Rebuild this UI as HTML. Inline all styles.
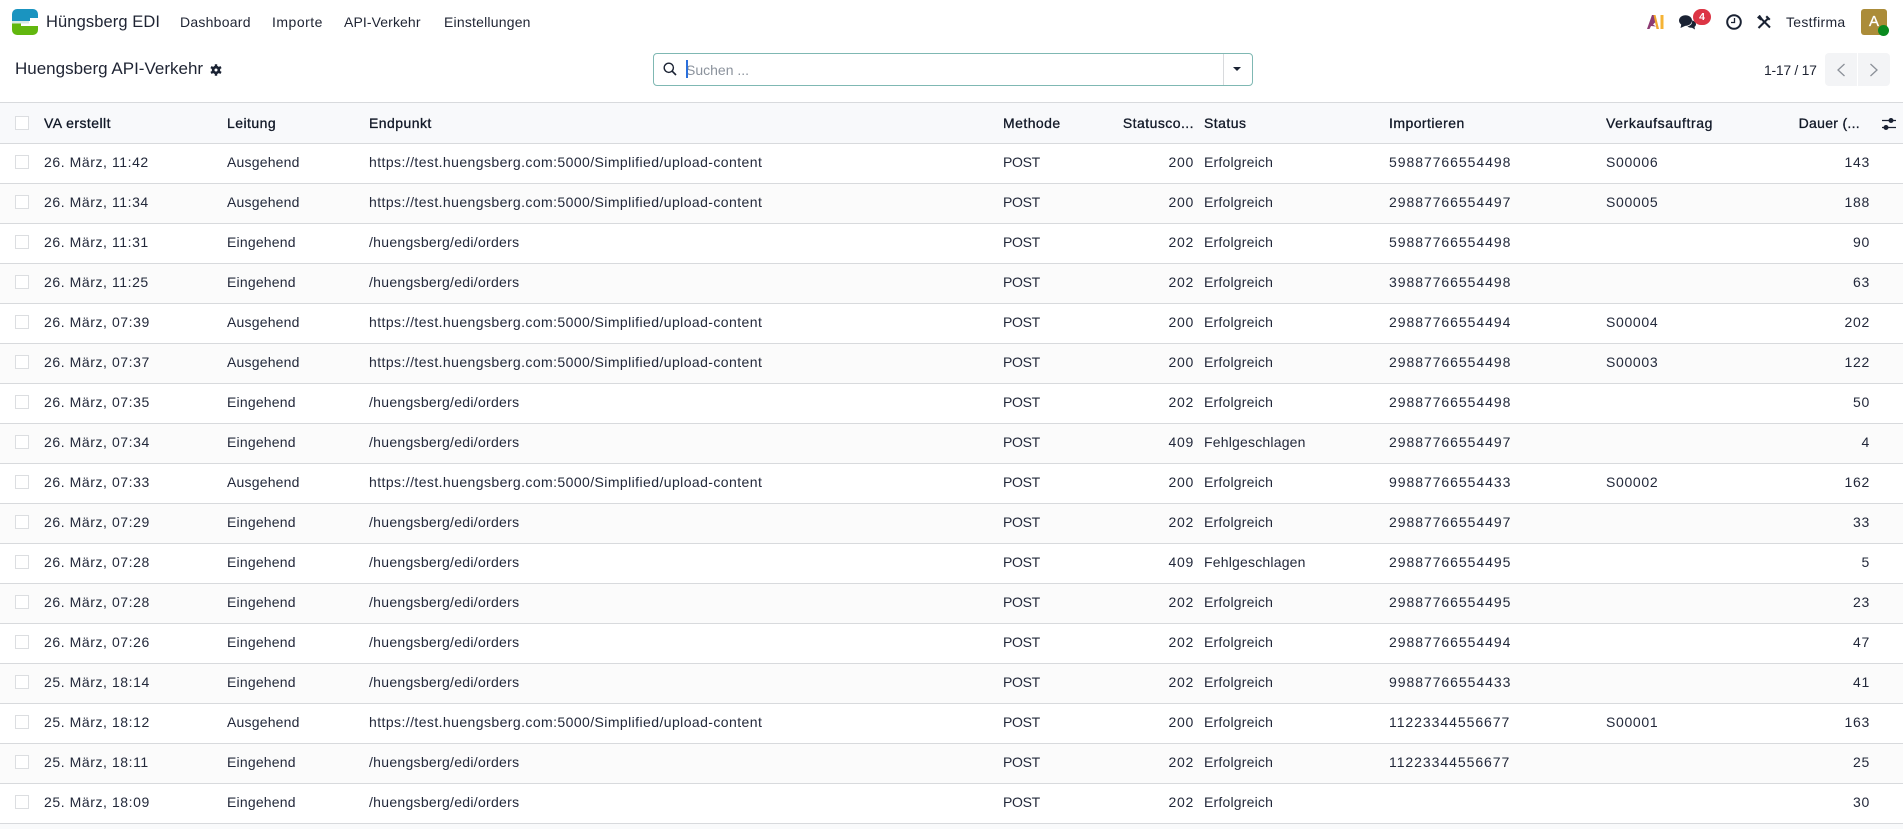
<!DOCTYPE html>
<html lang="de"><head><meta charset="utf-8"><title>Huengsberg API-Verkehr</title>
<style>
*{box-sizing:border-box}
html,body{margin:0;padding:0;width:1903px;height:829px;overflow:hidden;background:#f9fafb;font-family:"Liberation Sans",sans-serif;color:#1f2433;font-size:14px}
.top{position:absolute;left:0;top:0;width:1903px;height:103px;background:#fff}
.a{position:absolute;white-space:nowrap;line-height:20px}
table{position:absolute;left:0;top:102px;width:1903px;border-collapse:collapse;table-layout:fixed;border-top:1px solid #d8dadd;background:#fff}
th{height:41px;background:#f8f9fb;font-weight:400;text-align:left;color:#111827;-webkit-text-stroke:.3px #111827;letter-spacing:.45px;padding:0;border-bottom:1px solid #d8dadd;white-space:nowrap;overflow:hidden}
td{height:40px;padding:0 0 3px;border-bottom:1px solid #d8dadd;white-space:nowrap;color:#22283a;overflow:hidden}
tbody tr:nth-child(even) td{background:#fbfbfb}
td:nth-child(2){letter-spacing:.57px}
td:nth-child(3){letter-spacing:.2px}
td:nth-child(4){letter-spacing:.29px}
td.u{letter-spacing:.42px}
td:nth-child(5){letter-spacing:-.3px}
td:nth-child(6){letter-spacing:.7px}
td:nth-child(7){letter-spacing:.2px}
td:nth-child(8){letter-spacing:.95px}
td:nth-child(9){letter-spacing:.67px}
td:nth-child(10){letter-spacing:.7px}
.r{text-align:right;padding-right:10px}
th.d{padding-right:20px;letter-spacing:.3px}
th.v{letter-spacing:.6px}
.c{position:relative}
.c i{position:absolute;left:15px;top:11px;width:14px;height:14px;border:1px solid #dcdee1;background:#fff;display:block}
th.c i{top:13px}
</style></head><body>
<div class="top">
<svg class="a" style="left:12px;top:9px" width="26" height="26" viewBox="0 0 26 26"><path d="M5 0H21a5 5 0 0 1 5 5V9H18V12H0V5a5 5 0 0 1 5-5z" fill="#1a94c0"/><rect x="18" y="9" width="8" height="3" fill="#fff"/><rect x="0" y="12" width="17" height="2.500" fill="#d6e9e4"/><path d="M0 14.500H9V17H26v4a5 5 0 0 1-5 5H5a5 5 0 0 1-5-5z" fill="#62b70f"/></svg>
<div class="a" style="left:46px;top:12px;font-size:16.500px;letter-spacing:.1px">Hüngsberg EDI</div>
<div class="a" style="left:180px;top:12px;letter-spacing:.25px">Dashboard</div>
<div class="a" style="left:272px;top:12px;letter-spacing:.5px">Importe</div>
<div class="a" style="left:344px;top:12px;letter-spacing:.1px">API-Verkehr</div>
<div class="a" style="left:444px;top:12px;letter-spacing:.2px">Einstellungen</div>
<svg class="a" style="left:1647px;top:15px" width="17" height="14" viewBox="0 0 17 14"><path d="M0 14L5 0H8L9.500 6 6 9.500 9 11.500 4 11 2.500 14z" fill="#8c3b73"/><path d="M6.500 0H8.500L12 14H9.500z" fill="#f0a52e"/><rect x="13.500" y="0" width="3" height="14" fill="#f5b335"/></svg>
<svg class="a" style="left:1679px;top:15px" width="17" height="15" viewBox="0 0 17 15"><ellipse cx="6.500" cy="5.500" rx="6.500" ry="5.300" fill="#1a2233"/><path d="M2.500 8.500L1.500 13L7 10.500z" fill="#1a2233"/><path d="M13.500 5.500c2 .7 3.500 2 3.500 3.800 0 1.100-.6 2-1.500 2.600l.5 2.600-3-1.800c-2 .2-3.600-.3-4.600-1.400 3-.3 5.300-2.600 4.600-5.800z" fill="#1a2233"/></svg>
<div class="a" style="left:1693px;top:9px;width:18px;height:16px;border-radius:8px;background:#dc3545;color:#fff;font-size:10.500px;font-weight:700;text-align:center;line-height:16px">4</div>
<svg class="a" style="left:1726px;top:14px" width="16" height="16" viewBox="0 0 16 16"><circle cx="8" cy="8" r="6.800" fill="none" stroke="#1a2233" stroke-width="2"/><path d="M8.500 4v4.500H5" fill="none" stroke="#1a2233" stroke-width="1.300"/></svg>
<svg class="a" style="left:1756px;top:14px" width="16" height="16" viewBox="0 0 16 16"><path d="M2.500 14L12 4.500" stroke="#1a2233" stroke-width="2" fill="none"/><path d="M11 1.500L14.500 5 13 6.500 9.500 3z" fill="#1a2233"/><path d="M5 4.500L14 13.500" stroke="#1a2233" stroke-width="2" fill="none"/><path d="M1 3.500L3.500 1 4 1 6.500 4.500 4.500 6.500z" fill="#1a2233"/></svg>
<div class="a" style="left:1786px;top:12px;font-size:14px;letter-spacing:.3px">Testfirma</div>
<div class="a" style="left:1861px;top:9px;width:26px;height:26px;border-radius:3px;background:#ab8c39;color:#fff;font-size:15px;-webkit-text-stroke:.3px #fff;text-align:center;line-height:26px">A</div>
<div class="a" style="left:1878px;top:25px;width:11px;height:11px;border-radius:50%;background:#0a8a1f"></div>
<div class="a" style="left:15px;top:59px;font-size:17px">Huengsberg API-Verkehr</div>
<svg class="a" style="left:210px;top:64px" width="12" height="12" viewBox="0 0 12 12"><path d="M6 .3v11.400M1 3.100l10 5.800M1 8.900l10-5.800" stroke="#1a2233" stroke-width="2.400"/><circle cx="6" cy="6" r="4.200" fill="#1a2233"/><circle cx="6" cy="6" r="1.500" fill="#fff"/></svg>
<div class="a" style="left:653px;top:53px;width:600px;height:33px;border:1px solid #7fb8b3;border-radius:4px;background:#fff"></div>
<div class="a" style="left:1223px;top:54px;width:1px;height:31px;background:#d8dadd"></div>
<svg class="a" style="left:663px;top:62px" width="14" height="14" viewBox="0 0 14 14"><circle cx="5.800" cy="5.800" r="4.600" fill="none" stroke="#1a2233" stroke-width="1.400"/><path d="M9.200 9.200L13 13" stroke="#1a2233" stroke-width="1.600"/></svg>
<div class="a" style="left:686px;top:60px;color:#8b929c">Suchen ...</div>
<div class="a" style="left:686px;top:60px;width:2px;height:18px;background:#2a6fdb"></div>
<div class="a" style="left:1233px;top:67px;width:0;height:0;border-left:4.500px solid transparent;border-right:4.500px solid transparent;border-top:4.500px solid #1a2233"></div>
<div class="a" style="left:1764px;top:60px;letter-spacing:-.3px">1-17 / 17</div>
<div class="a" style="left:1825px;top:53px;width:32px;height:33px;background:#f3f4f6;border-radius:4px 0 0 4px"></div>
<div class="a" style="left:1858px;top:53px;width:32px;height:33px;background:#f3f4f6;border-radius:0 4px 4px 0"></div>
<svg class="a" style="left:1836px;top:62px" width="10" height="16" viewBox="0 0 10 16"><path d="M8.500 2L2 8l6.500 6" fill="none" stroke="#8b9098" stroke-width="1.300"/></svg>
<svg class="a" style="left:1869px;top:62px" width="10" height="16" viewBox="0 0 10 16"><path d="M1.500 2L8 8l-6.500 6" fill="none" stroke="#8b9098" stroke-width="1.300"/></svg>
</div>
<table>
<colgroup><col style="width:44px"><col style="width:183px"><col style="width:142px"><col style="width:634px"><col style="width:107px"><col style="width:94px"><col style="width:185px"><col style="width:217px"><col style="width:174px"><col style="width:100px"><col style="width:23px"></colgroup>
<thead><tr><th class="c"><i></i></th><th>VA erstellt</th><th>Leitung</th><th>Endpunkt</th><th>Methode</th><th class="r">Statusco...</th><th>Status</th><th>Importieren</th><th class="v">Verkaufsauftrag</th><th class="r d">Dauer (...</th><th style="position:relative"><svg style="position:absolute;left:2px;top:14px" width="14" height="14" viewBox="0 0 14 14"><path d="M0 3.500H14M0 10.500H14" stroke="#1a2233" stroke-width="1.200"/><circle cx="9" cy="3.500" r="2.500" fill="#1a2233"/><circle cx="4" cy="10.500" r="2.500" fill="#1a2233"/></svg></th></tr></thead>
<tbody>
<tr><td class="c"><i></i></td><td>26. März, 11:42</td><td>Ausgehend</td><td class="u">https://test.huengsberg.com:5000/Simplified/upload-content</td><td>POST</td><td class="r">200</td><td>Erfolgreich</td><td>59887766554498</td><td>S00006</td><td class="r">143</td><td></td></tr>
<tr><td class="c"><i></i></td><td>26. März, 11:34</td><td>Ausgehend</td><td class="u">https://test.huengsberg.com:5000/Simplified/upload-content</td><td>POST</td><td class="r">200</td><td>Erfolgreich</td><td>29887766554497</td><td>S00005</td><td class="r">188</td><td></td></tr>
<tr><td class="c"><i></i></td><td>26. März, 11:31</td><td>Eingehend</td><td>/huengsberg/edi/orders</td><td>POST</td><td class="r">202</td><td>Erfolgreich</td><td>59887766554498</td><td></td><td class="r">90</td><td></td></tr>
<tr><td class="c"><i></i></td><td>26. März, 11:25</td><td>Eingehend</td><td>/huengsberg/edi/orders</td><td>POST</td><td class="r">202</td><td>Erfolgreich</td><td>39887766554498</td><td></td><td class="r">63</td><td></td></tr>
<tr><td class="c"><i></i></td><td>26. März, 07:39</td><td>Ausgehend</td><td class="u">https://test.huengsberg.com:5000/Simplified/upload-content</td><td>POST</td><td class="r">200</td><td>Erfolgreich</td><td>29887766554494</td><td>S00004</td><td class="r">202</td><td></td></tr>
<tr><td class="c"><i></i></td><td>26. März, 07:37</td><td>Ausgehend</td><td class="u">https://test.huengsberg.com:5000/Simplified/upload-content</td><td>POST</td><td class="r">200</td><td>Erfolgreich</td><td>29887766554498</td><td>S00003</td><td class="r">122</td><td></td></tr>
<tr><td class="c"><i></i></td><td>26. März, 07:35</td><td>Eingehend</td><td>/huengsberg/edi/orders</td><td>POST</td><td class="r">202</td><td>Erfolgreich</td><td>29887766554498</td><td></td><td class="r">50</td><td></td></tr>
<tr><td class="c"><i></i></td><td>26. März, 07:34</td><td>Eingehend</td><td>/huengsberg/edi/orders</td><td>POST</td><td class="r">409</td><td>Fehlgeschlagen</td><td>29887766554497</td><td></td><td class="r">4</td><td></td></tr>
<tr><td class="c"><i></i></td><td>26. März, 07:33</td><td>Ausgehend</td><td class="u">https://test.huengsberg.com:5000/Simplified/upload-content</td><td>POST</td><td class="r">200</td><td>Erfolgreich</td><td>99887766554433</td><td>S00002</td><td class="r">162</td><td></td></tr>
<tr><td class="c"><i></i></td><td>26. März, 07:29</td><td>Eingehend</td><td>/huengsberg/edi/orders</td><td>POST</td><td class="r">202</td><td>Erfolgreich</td><td>29887766554497</td><td></td><td class="r">33</td><td></td></tr>
<tr><td class="c"><i></i></td><td>26. März, 07:28</td><td>Eingehend</td><td>/huengsberg/edi/orders</td><td>POST</td><td class="r">409</td><td>Fehlgeschlagen</td><td>29887766554495</td><td></td><td class="r">5</td><td></td></tr>
<tr><td class="c"><i></i></td><td>26. März, 07:28</td><td>Eingehend</td><td>/huengsberg/edi/orders</td><td>POST</td><td class="r">202</td><td>Erfolgreich</td><td>29887766554495</td><td></td><td class="r">23</td><td></td></tr>
<tr><td class="c"><i></i></td><td>26. März, 07:26</td><td>Eingehend</td><td>/huengsberg/edi/orders</td><td>POST</td><td class="r">202</td><td>Erfolgreich</td><td>29887766554494</td><td></td><td class="r">47</td><td></td></tr>
<tr><td class="c"><i></i></td><td>25. März, 18:14</td><td>Eingehend</td><td>/huengsberg/edi/orders</td><td>POST</td><td class="r">202</td><td>Erfolgreich</td><td>99887766554433</td><td></td><td class="r">41</td><td></td></tr>
<tr><td class="c"><i></i></td><td>25. März, 18:12</td><td>Ausgehend</td><td class="u">https://test.huengsberg.com:5000/Simplified/upload-content</td><td>POST</td><td class="r">200</td><td>Erfolgreich</td><td>11223344556677</td><td>S00001</td><td class="r">163</td><td></td></tr>
<tr><td class="c"><i></i></td><td>25. März, 18:11</td><td>Eingehend</td><td>/huengsberg/edi/orders</td><td>POST</td><td class="r">202</td><td>Erfolgreich</td><td>11223344556677</td><td></td><td class="r">25</td><td></td></tr>
<tr><td class="c"><i></i></td><td>25. März, 18:09</td><td>Eingehend</td><td>/huengsberg/edi/orders</td><td>POST</td><td class="r">202</td><td>Erfolgreich</td><td></td><td></td><td class="r">30</td><td></td></tr>
</tbody></table>
</body></html>
